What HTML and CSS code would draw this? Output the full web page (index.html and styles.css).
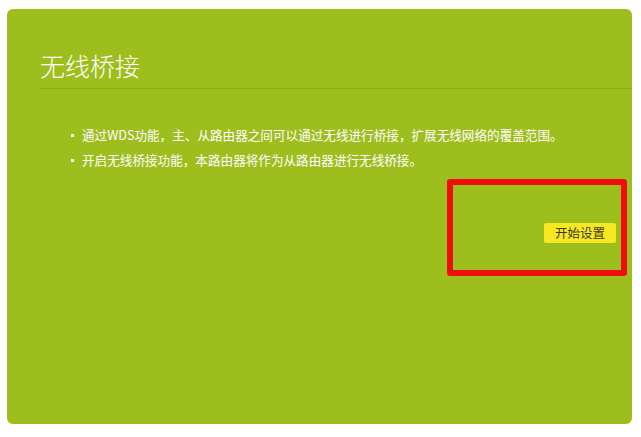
FILE: index.html
```html
<!DOCTYPE html>
<html lang="zh-CN">
<head>
<meta charset="utf-8">
<title>无线桥接</title>
<link rel="stylesheet" href="styles.css">
</head>
<body>
<div class="panel">
  <h1 class="title">无线桥接</h1>
  <ul class="notes">
    <li>通过WDS功能，主、从路由器之间可以通过无线进行桥接，扩展无线网络的覆盖范围。</li>
    <li>开启无线桥接功能，本路由器将作为从路由器进行无线桥接。</li>
  </ul>
  <div class="actions">
    <button class="start-btn">开始设置</button>
  </div>
  <div class="highlight"></div>
</div>
</body>
</html>
```
FILE: styles.css
```css
html, body {
  margin: 0;
  padding: 0;
  background: #ffffff;
}
body {
  font-family: "Microsoft YaHei", "Noto Sans CJK SC", "Noto Sans", sans-serif;
}
.panel {
  position: relative;
  box-sizing: border-box;
  margin: 9px 0 0 7px;
  width: 625px;
  height: 415px;
  background: #9ebe1e;
  border-radius: 6px;
  overflow: hidden;
}
.title {
  margin: 0 0 0 33px;
  padding: 38px 0 5px 0;
  font-size: 25px;
  line-height: 36px;
  font-weight: 300;
  color: #ffffff;
  border-bottom: 1px solid #8fad1a;
}
.notes {
  list-style: none;
  margin: 33px 0 0 0;
  padding: 0 0 0 75px;
}
.notes li {
  position: relative;
  font-size: 12.6px;
  line-height: 25px;
  color: #ffffff;
}
.notes li::before {
  content: "";
  position: absolute;
  left: -11px;
  top: 12px;
  width: 3px;
  height: 3px;
  background: #ffffff;
}
.actions {
  display: flex;
  justify-content: flex-end;
  margin-top: 51px;
  padding-right: 16px;
}
.start-btn {
  font-family: inherit;
  font-size: 12.5px;
  line-height: 20px;
  height: 20px;
  padding: 0 11px;
  border: none;
  border-radius: 2px;
  background: #f6e722;
  color: #3a3a1a;
  cursor: pointer;
}
.highlight {
  position: absolute;
  left: 440px;
  top: 170px;
  width: 180px;
  height: 97px;
  box-sizing: border-box;
  border: 6px solid #f20d0d;
  border-radius: 3px;
  pointer-events: none;
}
```
